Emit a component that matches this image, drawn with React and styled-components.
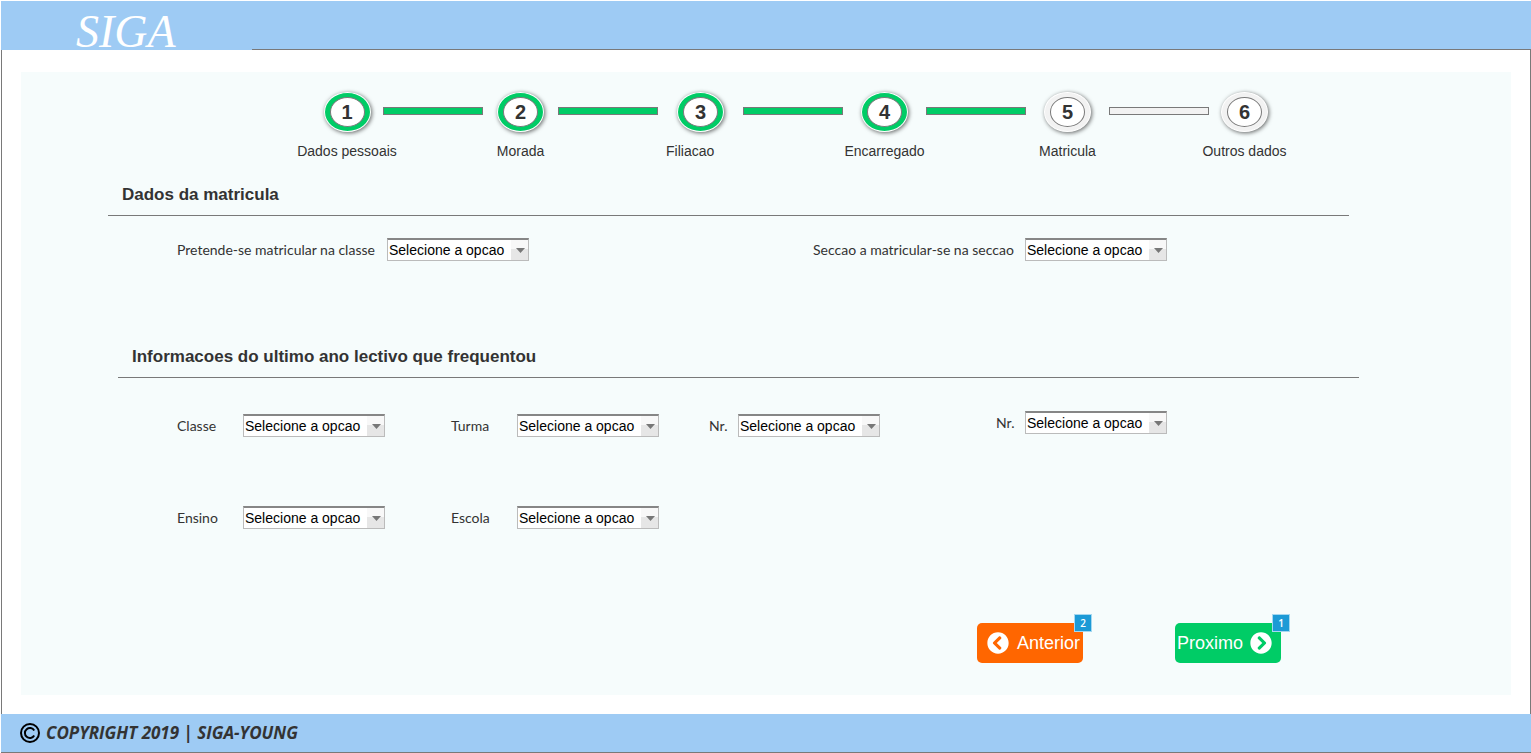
import React from "react";
import styled, { createGlobalStyle } from "styled-components";
import { FaChevronCircleLeft, FaChevronCircleRight } from "react-icons/fa";

const blue = "#9ecbf4";
const line = "#797979";
const green = "#00cc66";

const GlobalStyle = createGlobalStyle`
  *, *::before, *::after { box-sizing: border-box; }
  body {
    margin: 0;
    background: #fff;
    color: #333;
    font-family: "Liberation Sans", Arial, sans-serif;
    font-size: 14px;
  }
`;

const Page = styled.div`
  display: flex;
  flex-direction: column;
  min-height: 100vh;
  padding: 1px 0 0 1px;
`;

const Header = styled.header`
  display: flex;
  height: 49px;
  background: ${blue};
`;

const Brand = styled.a`
  width: 251px;
  padding-left: 75px;
  color: #fff;
  font: italic 46px/62px "Liberation Serif", "Times New Roman", serif;
  text-decoration: none;
`;

const HeaderRule = styled.div`
  flex: 1;
  border-bottom: 1px solid ${line};
`;

const Main = styled.main`
  flex: 1;
  padding: 22px 19px 19px;
  border: solid ${line};
  border-width: 0 1px;
`;

const Panel = styled.form`
  padding: 20px 0 32px;
  background: #f6fcfc;
`;

const Stepper = styled.ol`
  display: grid;
  grid-template-columns:
    minmax(0, 72fr) minmax(0, 100fr) minmax(0, 75fr) minmax(0, 100fr)
    minmax(0, 85fr) minmax(0, 100fr) minmax(0, 83fr) minmax(0, 100fr)
    minmax(0, 83fr) minmax(0, 100fr) minmax(0, 71fr);
  margin: 0 231px 0 290px;
  padding: 0;
  list-style: none;
`;

const Step = styled.li`
  display: flex;
  flex-direction: column;
  align-items: center;
  gap: 10px;
`;

const StepRing = styled.span`
  display: grid;
  place-items: center;
  width: 47px;
  height: 40px;
  border: 1px solid #fff;
  border-radius: 50%;
  background: ${(p) => (p.$done ? green : "#f2f2f2")};
  box-shadow: 1px 1px 4px rgba(0, 0, 0, 0.6);
`;

const StepNumber = styled.span`
  display: grid;
  place-items: center;
  width: 35px;
  height: 30px;
  border: 1px solid ${line};
  border-radius: 50%;
  background: #fff;
  font-size: 20px;
  font-weight: 700;
  line-height: 20px;
`;

const StepLabel = styled.span`
  align-self: ${(p) => (p.$start ? "flex-start" : "center")};
  margin-left: ${(p) => (p.$start ? "8px" : "0")};
  line-height: 18px;
  white-space: nowrap;
`;

const Connector = styled.li`
  height: 8px;
  margin-top: 15px;
  border: 1px solid ${line};
  background: ${(p) => (p.$done ? green : "#f2f2f2")};
`;

const Section = styled.section`
  margin: ${(p) => (p.$inset ? "86px 152px 0 97px" : "25px 162px 0 87px")};
`;

const SectionTitle = styled.h2`
  margin: 0;
  padding: 0 14px 10px;
  border-bottom: 1px solid ${line};
  font-size: 17px;
  line-height: 20px;
`;

const Fields = styled.div`
  display: grid;
  grid-template-columns: ${(p) => p.$columns};
  row-gap: 69px;
  margin-top: ${(p) => p.$top};
  padding-left: ${(p) => p.$left};
`;

const Field = styled.div`
  display: flex;
  align-items: center;
  align-self: ${(p) => (p.$raised ? "start" : "end")};
  padding-bottom: ${(p) => (p.$raised ? "3px" : "0")};
`;

const FieldLabel = styled.label`
  width: ${(p) => p.$width};
  font-family: Lato, sans-serif;
  font-size: 14px;
  line-height: 18px;
  white-space: nowrap;
`;

const SelectBox = styled.span`
  display: grid;
  width: 142px;
  height: 23px;
`;

const Select = styled.select`
  grid-area: 1 / 1;
  appearance: none;
  padding: 0 0 0 1px;
  border: 1px solid #bbb;
  border-top: 2px solid #868686;
  border-radius: 0;
  background: #fff;
  color: #000;
  font: 14px "Liberation Sans", Arial, sans-serif;
`;

const SelectArrow = styled.span`
  grid-area: 1 / 1;
  justify-self: end;
  display: grid;
  place-items: center;
  width: 17px;
  margin: 2px 1px 1px 0;
  padding: 1px 0 0 1px;
  background: linear-gradient(#f8f8f8 45%, #e6e6e6 45%);
  pointer-events: none;
`;

const Actions = styled.div`
  display: flex;
  justify-content: flex-end;
  gap: 92px;
  margin: 94px 230px 0 0;
`;

const ActionButton = styled.button`
  position: relative;
  display: flex;
  align-items: center;
  gap: ${(p) => (p.$next ? "7px" : "8px")};
  width: 106px;
  height: 40px;
  padding: ${(p) => (p.$next ? "0 0 0 2px" : "0 0 0 10px")};
  border: 0;
  border-radius: 5px;
  background: ${(p) => (p.$next ? green : "#ff6600")};
  color: #fff;
  font: 18px "Liberation Sans", Arial, sans-serif;

  svg { flex: none; }
`;

const Badge = styled.span`
  position: absolute;
  top: -9px;
  right: -9px;
  width: 18px;
  height: 18px;
  border: 1px solid #a5d8f0;
  background: #1c9ad6;
  font: 600 10px/16px "Open Sans", sans-serif;
  text-align: center;
`;

const Footer = styled.footer`
  display: flex;
  align-items: center;
  gap: 6px;
  height: 39px;
  padding: 0 19px 1px;
  border-bottom: 1px solid ${line};
  background: ${blue};
  font: italic 700 17px/21px "Open Sans", sans-serif;
`;

const steps = [
  { label: "Dados pessoais", done: true },
  { label: "Morada", done: true },
  { label: "Filiacao", done: true, start: true },
  { label: "Encarregado", done: true },
  { label: "Matricula" },
  { label: "Outros dados" },
];

const enrolment = [
  { id: "classe-matricula", label: "Pretende-se matricular na classe", width: "210px" },
  { id: "seccao", label: "Seccao a matricular-se na seccao", width: "212px" },
];

const lastYear = [
  { id: "classe", label: "Classe", width: "66px" },
  { id: "turma", label: "Turma", width: "66px" },
  { id: "nr-turma", label: "Nr.", width: "29px" },
  { id: "nr-aluno", label: "Nr.", width: "29px", raised: true },
  { id: "ensino", label: "Ensino", width: "66px" },
  { id: "escola", label: "Escola", width: "66px" },
];

function SelectField({ id, label, width, raised }) {
  return (
    <Field $raised={raised}>
      <FieldLabel htmlFor={id} $width={width}>{label}</FieldLabel>
      <SelectBox>
        <Select id={id}>
          <option>Selecione a opcao</option>
        </Select>
        <SelectArrow>
          <svg width="9" height="5" viewBox="0 0 9 5" aria-hidden="true">
            <path d="M0 0h9L4.5 5z" fill="#777" />
          </svg>
        </SelectArrow>
      </SelectBox>
    </Field>
  );
}

function CopyrightIcon() {
  return (
    <svg width="20" height="20" viewBox="0 0 20 20" fill="none" stroke="#000" strokeWidth="2" aria-hidden="true">
      <circle cx="10" cy="10" r="9" />
      <path d="M14.2 7.4A5 5 0 1 0 14.2 12.6" />
    </svg>
  );
}

export default function App() {
  return (
    <Page>
      <GlobalStyle />
      <Header>
        <Brand href="#">SIGA</Brand>
        <HeaderRule />
      </Header>
      <Main>
        <Panel onSubmit={(e) => e.preventDefault()}>
          <Stepper>
            {steps.map((step, i) => (
              <React.Fragment key={step.label}>
                <Step>
                  <StepRing $done={step.done}>
                    <StepNumber>{i + 1}</StepNumber>
                  </StepRing>
                  <StepLabel $start={step.start}>{step.label}</StepLabel>
                </Step>
                {i < steps.length - 1 && <Connector $done={step.done} aria-hidden="true" />}
              </React.Fragment>
            ))}
          </Stepper>

          <Section>
            <SectionTitle>Dados da matricula</SectionTitle>
            <Fields $columns="636fr 536fr" $top="22px" $left="69px">
              {enrolment.map((f) => <SelectField key={f.id} {...f} />)}
            </Fields>
          </Section>

          <Section $inset>
            <SectionTitle>Informacoes do ultimo ano lectivo que frequentou</SectionTitle>
            <Fields $columns="274fr 258fr 287fr 363fr" $top="33px" $left="59px">
              {lastYear.map((f) => <SelectField key={f.id} {...f} />)}
            </Fields>
          </Section>

          <Actions>
            <ActionButton type="button">
              <FaChevronCircleLeft size={22} />
              Anterior
              <Badge>2</Badge>
            </ActionButton>
            <ActionButton type="submit" $next>
              Proximo
              <FaChevronCircleRight size={22} />
              <Badge>1</Badge>
            </ActionButton>
          </Actions>
        </Panel>
      </Main>
      <Footer>
        <CopyrightIcon />
        COPYRIGHT 2019 | SIGA-YOUNG
      </Footer>
    </Page>
  );
}
